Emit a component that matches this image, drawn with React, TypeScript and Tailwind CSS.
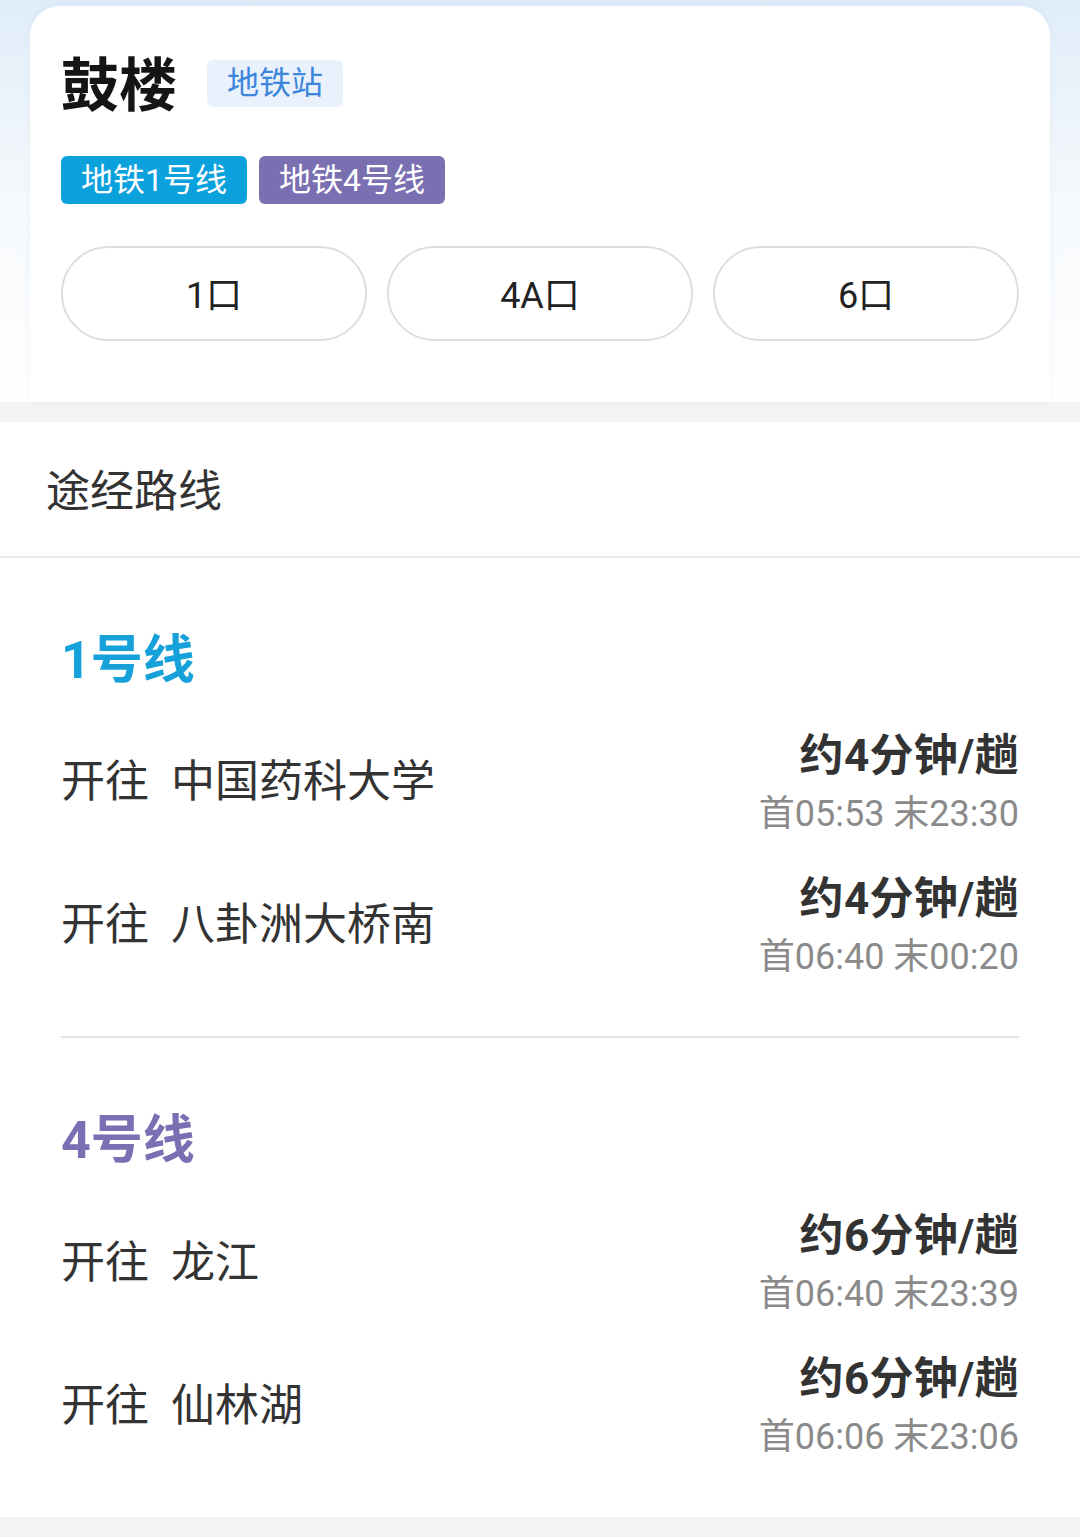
import React from "react";

const FONT = { fontFamily: "Roboto, 'Noto Sans CJK SC', 'Noto Sans', sans-serif" };

type Dir = { to: string; freq: string; num: string; first: string; last: string };

const lines: { name: string; color: string; dirs: Dir[] }[] = [
  {
    name: "1号线",
    color: "text-[#17a1da]",
    dirs: [
      { to: "中国药科大学", num: "4", freq: "分钟/趟", first: "05:53", last: "23:30" },
      { to: "八卦洲大桥南", num: "4", freq: "分钟/趟", first: "06:40", last: "00:20" },
    ],
  },
  {
    name: "4号线",
    color: "text-[#7a6fb2]",
    dirs: [
      { to: "龙江", num: "6", freq: "分钟/趟", first: "06:40", last: "23:39" },
      { to: "仙林湖", num: "6", freq: "分钟/趟", first: "06:06", last: "23:06" },
    ],
  },
];

function Row({ d }: { d: Dir }) {
  return (
    <div className="h-[143px] flex items-center justify-between">
      <div className="flex items-center text-[44px] leading-[1.2] text-[#333]">
        <span>开往</span>
        <span className="ml-[22px]">{d.to}</span>
      </div>
      <div className="flex flex-col items-end">
        <div className="text-[44px] leading-[1.2] font-bold text-[#333] tracking-[0.3px]">
          约{d.num}
          {d.freq}
        </div>
        <div className="mt-[10px] text-[36px] leading-[1.2] text-[#8a8a8a]">
          首{d.first} 末{d.last}
        </div>
      </div>
    </div>
  );
}

export default function App() {
  return (
    <div className="w-[1080px] min-h-[1537px] bg-[#f3f3f3]" style={FONT}>
      {/* Header */}
      <div className="bg-gradient-to-b from-[#e0edf9] via-[#f6f9fc] to-white pt-[6px]">
        <div className="mx-[30px] rounded-t-[30px] bg-white pt-[42px] pb-[61px] px-[31px] shadow-[0_-2px_8px_rgba(200,220,240,0.25)]">
          <div className="flex items-center h-[70px]">
            <span className="pt-[8px] text-[58px] leading-[1.2] font-bold text-[#151515]">鼓楼</span>
            <span className="ml-[30px] h-[47px] px-[20px] flex items-center rounded-[6px] bg-[#e8f1fc] text-[32px] text-[#3d86dc]">
              地铁站
            </span>
          </div>
          <div className="mt-[38px] flex gap-[12px]">
            <span className="h-[48px] px-[20px] flex items-center rounded-[6px] bg-[#0ba1dd] text-[32px] text-white">
              地铁1号线
            </span>
            <span className="h-[48px] px-[20px] flex items-center rounded-[6px] bg-[#7a6fb1] text-[32px] text-white">
              地铁4号线
            </span>
          </div>
          <div className="mt-[42px] grid grid-cols-3 gap-[20px]">
            {["1口", "4A口", "6口"].map((t) => (
              <div
                key={t}
                className="h-[95px] pt-[4px] rounded-full border-2 border-[#dedede] flex items-center justify-center text-[36px] text-[#222]"
              >
                {t}
              </div>
            ))}
          </div>
        </div>
      </div>

      {/* Routes */}
      <div className="mt-[20px] bg-white">
        <div className="h-[136px] flex items-center pt-[6px] pl-[46px] text-[44px] text-[#333] border-b-2 border-[#ebebeb]">
          途经路线
        </div>
        <div className="px-[61px]">
          {lines.map((l, i) => (
            <div
              key={l.name}
              className={`pt-[72px] pb-[39px] ${i === 0 ? "border-b-2 border-[#e2e2e2]" : ""}`}
            >
              <div className={`text-[52px] leading-[1.2] font-bold ${l.color}`}>{l.name}</div>
              <div className="mt-[19px]">
                {l.dirs.map((d) => (
                  <Row key={d.to} d={d} />
                ))}
              </div>
            </div>
          ))}
        </div>
      </div>
    </div>
  );
}
